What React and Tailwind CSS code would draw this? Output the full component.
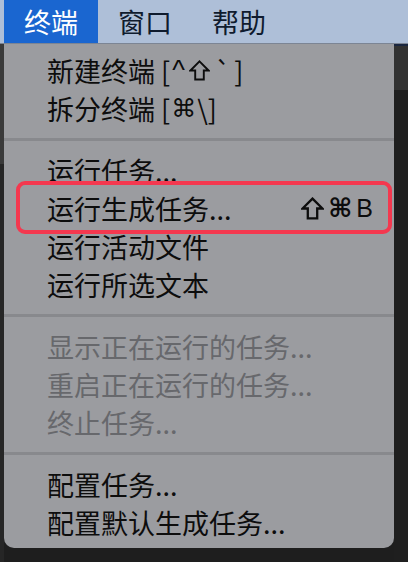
const Shift = ({ size = 22, stroke = 2 }) => (
  <svg width={size} height={size} viewBox="0 0 22 22" className="inline-block shrink-0">
    <path d="M11 1.5 L20.5 11 L15.5 11 L15.5 20.5 L6.5 20.5 L6.5 11 L1.5 11 Z" fill="none" stroke="#0d0d0d" strokeWidth={stroke} strokeLinejoin="miter" />
  </svg>
);

export default function App() {
  const Row = ({ children, disabled, shortcut, highlight }) => (
    <div className="relative h-[38px] flex items-center justify-between pl-[43px] pr-[21px]">
      <span className={`text-[27px] leading-none whitespace-nowrap flex items-center ${disabled ? "text-[#67686c]" : "text-[#0d0d0d]"}`}>
        {children}
      </span>
      {shortcut && (
        <span className="flex items-center gap-[4px] leading-none text-[#0d0d0d]">
          <Shift size={23} stroke={2.2} />
          <span className="font-['DejaVu_Sans',sans-serif] text-[26px] font-bold">⌘</span>
          <span className="font-['Liberation_Sans',sans-serif] text-[25px]">B</span>
        </span>
      )}
      {highlight && (
        <div className="absolute left-[12px] right-[2px] -top-[8px] -bottom-[7px] border-[4px] border-[#f4384f] rounded-[9px]" />
      )}
    </div>
  );
  const Sep = () => (
    <div className="pt-[11px] pb-[10px]">
      <div className="h-[3px] bg-[#88898d]" />
    </div>
  );
  return (
    <div className="w-[408px] h-[562px] bg-[#1e1e1e] flex flex-col overflow-hidden font-['Noto_Sans_CJK_SC',sans-serif]">
      <div className="h-[44px] bg-[#aebfd8] border-b border-[#7c8594] flex pl-1 text-[27px] leading-none">
        <div className="bg-[#1a66d0] text-white px-5 flex items-center">终端</div>
        <div className="text-[#0f1b2e] px-5 flex items-center">窗口</div>
        <div className="text-[#0f1b2e] px-5 flex items-center">帮助</div>
      </div>
      <div className="flex-1 flex">
        <div className="w-1 flex flex-col">
          <div className="h-[120px] bg-[#3a3a3a]" />
          <div className="flex-1 bg-[#262626]" />
        </div>
        <div className="w-[390px] self-start bg-[#9b9ca0] rounded-b-[10px] pt-[7px] pb-[7px]">
          <Row>
            新建终端 [
            <span className="font-['Liberation_Sans',sans-serif] text-[27px] mx-[2px]">^</span>
            <span className="mx-[2px] flex"><Shift size={21} stroke={2} /></span>
            <span className="mx-[3px]">`</span>]
          </Row>
          <Row>
            拆分终端 [
            <span className="font-['DejaVu_Sans',sans-serif] text-[25px] mx-[1px]">⌘</span>
            \]
          </Row>
          <Sep />
          <Row>运行任务...</Row>
          <Row highlight shortcut>运行生成任务...</Row>
          <Row>运行活动文件</Row>
          <Row>运行所选文本</Row>
          <Sep />
          <Row disabled>显示正在运行的任务...</Row>
          <Row disabled>重启正在运行的任务...</Row>
          <Row disabled>终止任务...</Row>
          <Sep />
          <Row>配置任务...</Row>
          <Row>配置默认生成任务...</Row>
        </div>
        <div className="flex-1 flex flex-col">
          <div className="h-[2px] bg-[#1a2740]" />
          <div className="h-[44px] bg-[#323232]" />
          <div className="flex-1 bg-[#1f1f1f]" />
        </div>
      </div>
    </div>
  );
}
